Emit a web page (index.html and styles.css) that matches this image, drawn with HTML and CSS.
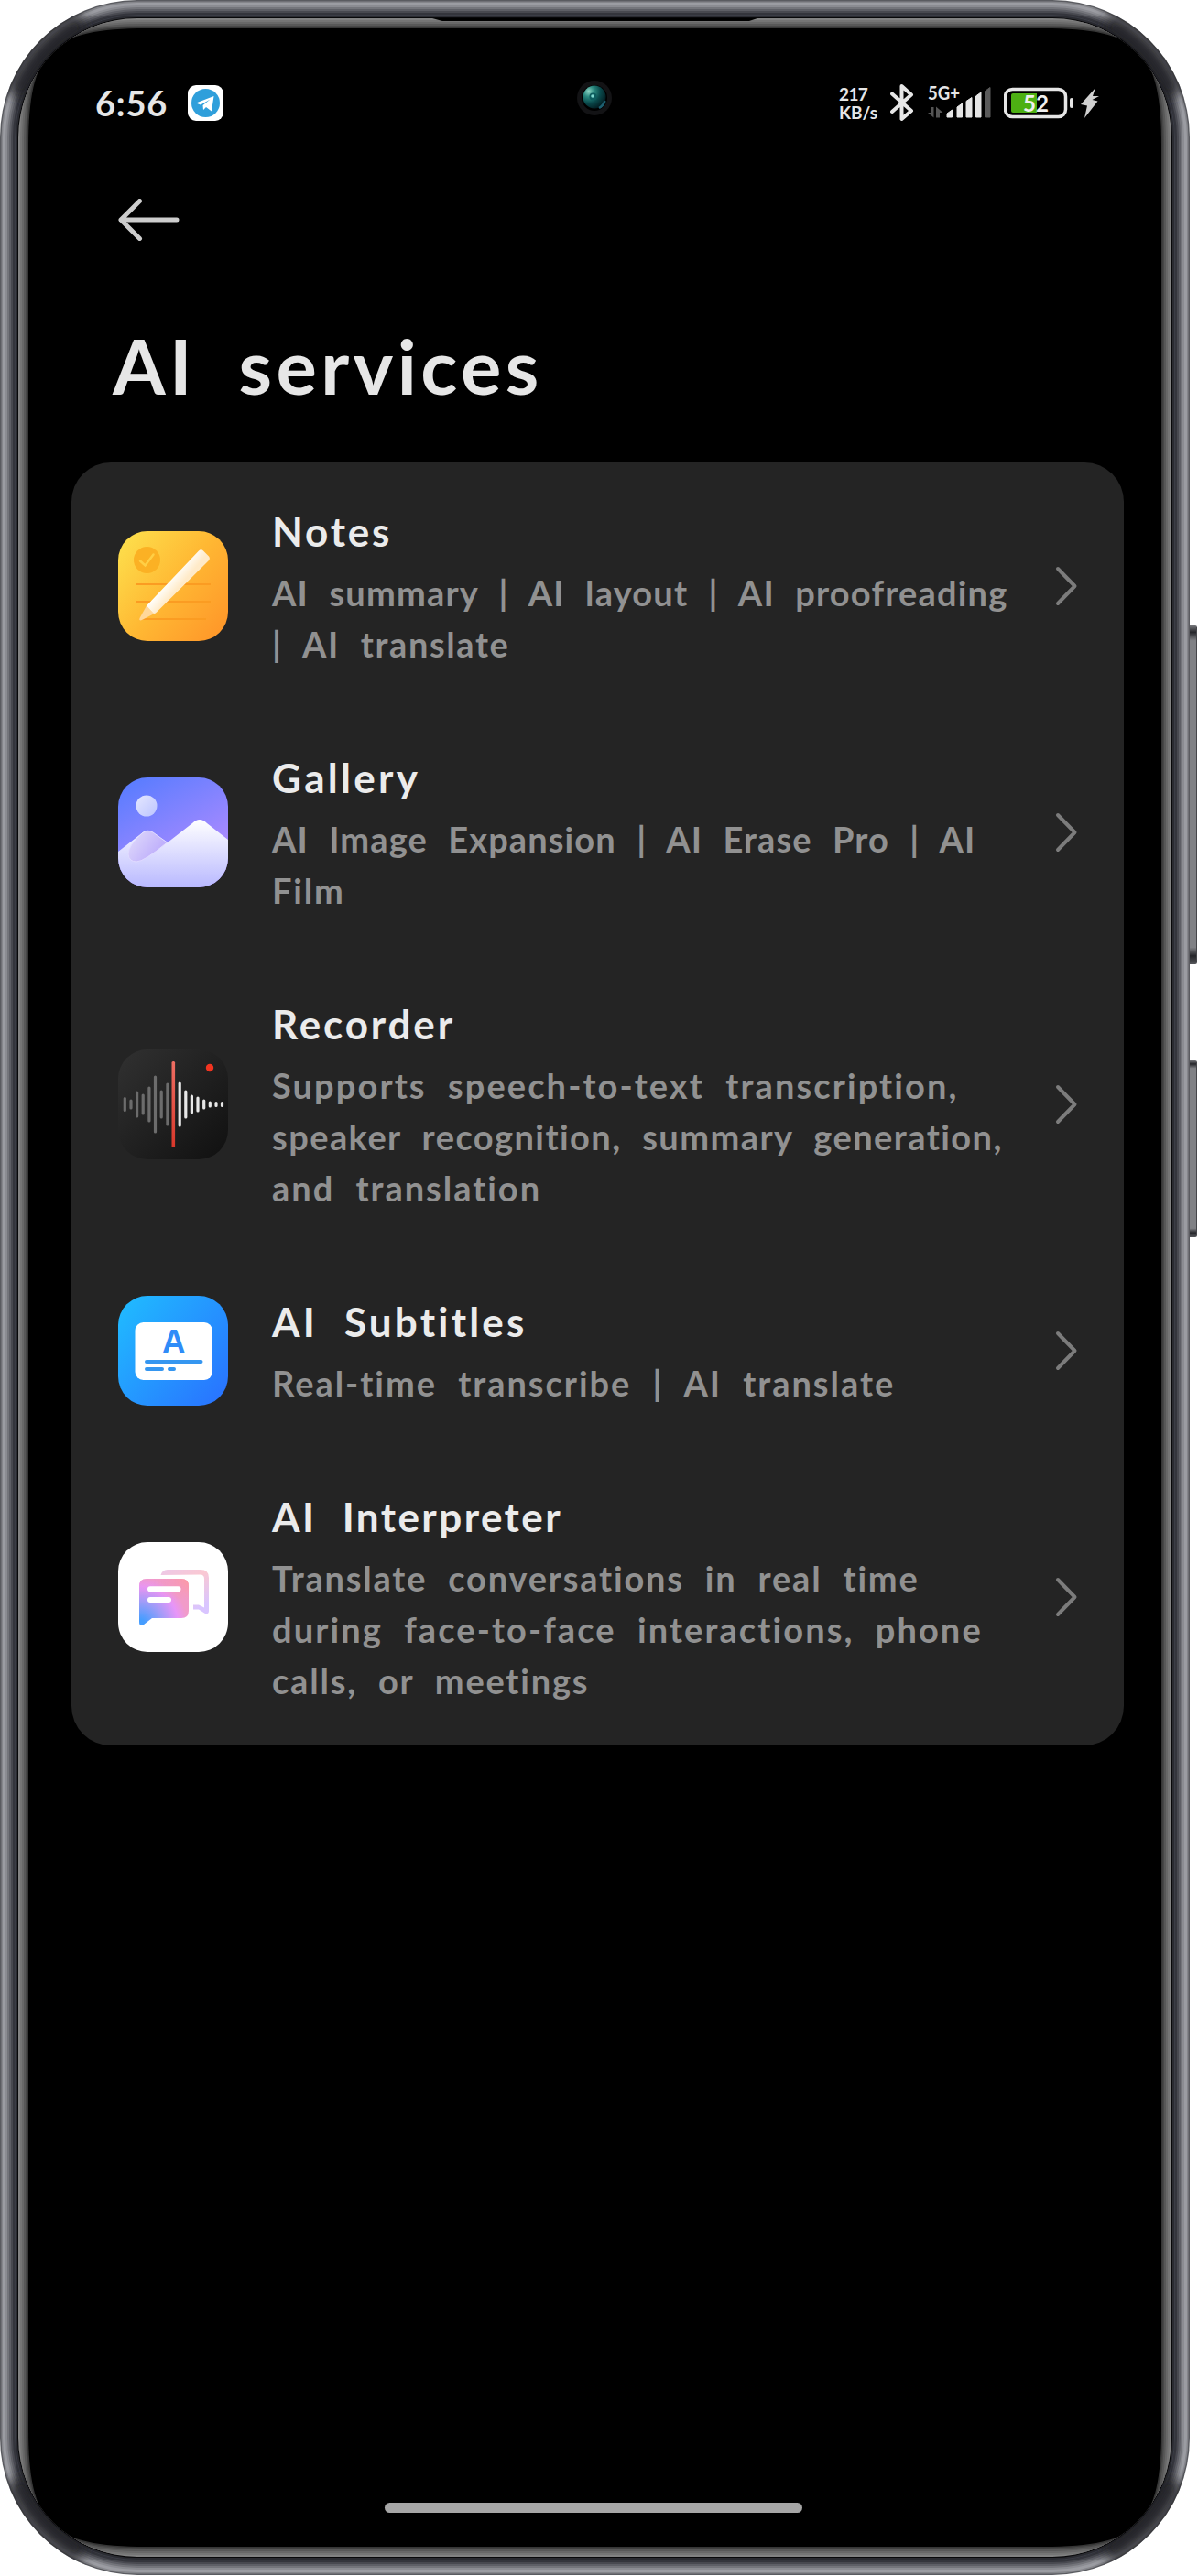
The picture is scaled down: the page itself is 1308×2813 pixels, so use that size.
FILE: index.html
```html
<!DOCTYPE html>
<html lang="en">
<head>
<meta charset="utf-8">
<title>AI services</title>
<link rel="stylesheet" href="styles.css">
</head>
<body>
<div class="phone">
  <svg class="frame" width="1308" height="2813" viewBox="0 0 1308 2813" aria-hidden="true">
    <defs>
      <clipPath id="body"><rect width="1299" height="2812" rx="150"/></clipPath>
      <clipPath id="inner"><rect x="20" y="20" width="1259" height="2772" rx="130"/></clipPath>
      <linearGradient id="key" x1="0" y1="0" x2="0" y2="1">
        <stop offset="0" stop-color="#77787c"/><stop offset=".02" stop-color="#25262a"/><stop offset=".045" stop-color="#808185"/>
        <stop offset=".95" stop-color="#808185"/><stop offset=".975" stop-color="#25262a"/><stop offset="1" stop-color="#55565a"/>
      </linearGradient>
      <filter id="soft" x="-50%" y="-50%" width="200%" height="200%"><feGaussianBlur stdDeviation="7"/></filter>
      <path id="screen" d="M31 160C31 55 55 31 160 31H1139C1244 31 1268 55 1268 160V2652C1268 2757 1244 2781 1139 2781H160C55 2781 31 2757 31 2652Z"/>
    </defs>
    <rect x="1296" y="683" width="11" height="370" rx="2" fill="url(#key)"/>
    <rect x="1296" y="1158" width="11" height="193" rx="2" fill="url(#key)"/>
    <path d="M1306.500 685V1051M1306.500 1160V1349" stroke="#45464a"/>
    <rect width="1299" height="2812" rx="150" fill="#5a5b60"/>
    <rect x="1.500" y="1.500" width="1296" height="2809" rx="148.500" fill="#85868b"/>
    <rect x="3" y="3" width="1293" height="2806" rx="147" fill="#9b9ca2"/>
    <rect x="6" y="6" width="1287" height="2800" rx="144" fill="#8b8c92"/>
    <rect x="8" y="8" width="1283" height="2796" rx="142" fill="#74757b"/>
    <rect x="10" y="10" width="1279" height="2792" rx="140" fill="#5e5f66"/>
    <rect x="12" y="12" width="1275" height="2788" rx="138" fill="#484950"/>
    <rect x="14" y="14" width="1271" height="2784" rx="136" fill="#34353c"/>
    <rect x="16" y="16" width="1267" height="2780" rx="134" fill="#2a2b31"/>
    <rect x="16.500" y="16.500" width="1266" height="2779" rx="133.500" fill="none" stroke="#3b3d46"/>
    <g clip-path="url(#body)" fill="none">
      <path d="M18 105Q36 52 92 24M1281 105Q1263 52 1207 24M18 2707Q36 2760 92 2788M1281 2707Q1263 2760 1207 2788" stroke="#222328" stroke-width="26" opacity=".9" filter="url(#soft)"/>
    </g>
    <rect x="19" y="19" width="1261" height="2774" rx="131" fill="#08080a"/>
    <g clip-path="url(#inner)">
      <rect x="20" y="20" width="1259" height="2772" fill="#828282"/>
      <use href="#screen" stroke="#757575" stroke-width="18"/>
      <use href="#screen" stroke="#686868" stroke-width="14"/>
      <use href="#screen" stroke="#585858" stroke-width="10"/>
      <use href="#screen" stroke="#484848" stroke-width="6"/>
      <use href="#screen" stroke="#363636" stroke-width="3"/>
      <use href="#screen"/>
      <path d="M472 20H827L818 23H483Z"/>
    </g>
  </svg>

  <svg class="camera" width="40" height="40" viewBox="0 0 40 40" aria-hidden="true">
    <defs><radialGradient id="lens" cx=".25" cy=".25" r=".85"><stop offset="0" stop-color="#8fd6c4"/><stop offset=".28" stop-color="#2b8a80"/><stop offset=".6" stop-color="#0a4a4c"/><stop offset="1" stop-color="#02181d"/></radialGradient></defs>
    <circle cx="20" cy="20" r="19" fill="#131315"/><circle cx="20" cy="20" r="14" fill="#000"/>
    <circle cx="20" cy="19" r="12.500" fill="url(#lens)"/>
    <path d="M25 31A14 14 0 0 0 31.500 23" fill="none" stroke="#1d5f70" stroke-width="2.500"/>
    <circle cx="18.500" cy="18.500" r="4" fill="#0d5c5e"/><circle cx="18" cy="18" r="1.800" fill="#7fd8cf"/>
  </svg>

  <header class="status">
    <div class="status-left">
      <span class="clock">6:56</span>
      <svg width="39" height="39" viewBox="0 0 39 39"><rect width="39" height="39" rx="9" fill="#fff"/><circle cx="19.500" cy="19.500" r="15.500" fill="#2f9fdb"/><path d="M9 19.500L28.500 12L26 28.500L20 24L17 27L16.500 22L24.500 15.500L14 21.500Z" fill="#fff"/></svg>
    </div>
    <div class="status-right">
      <div class="speed"><span class="speed-num">217</span><span>KB/s</span></div>
      <svg class="bt" width="26" height="42" viewBox="0 0 26 42"><path d="M2 11.500L23 30L12.500 39V3L23 12.500L2 31" fill="none" stroke="#e6e6e6" stroke-width="4" stroke-linejoin="round" stroke-linecap="round"/></svg>
      <svg class="signal" width="70" height="50" viewBox="0 -4 70 50">
        <text x="0" y="18" textLength="35" lengthAdjust="spacingAndGlyphs" class="net">5G+</text>
        <path d="M0 32H3V26H6.500V37.500ZM9 37.500V25.500L16.500 32H13V37.500Z" fill="#555"/>
        <path d="M21 37V33L26.500 29V37ZM32 37V26L37.500 22V37ZM42 37V19.500L48 15.500V37ZM52.500 37V14L58 10V37Z" fill="#e6e6e6" stroke="#e6e6e6" stroke-linejoin="round"/>
        <path d="M62.500 37V8.500L68 4.500V37Z" fill="#5a5a5a" stroke="#5a5a5a" stroke-linejoin="round"/>
      </svg>
      <svg class="battery" width="105" height="42" viewBox="0 0 105 42">
        <rect x="1.500" y="6.500" width="66" height="30" rx="8" fill="none" stroke="#e6e6e6" stroke-width="3.500"/>
        <path d="M8 13Q8 11 10 11H36V32H10Q8 32 8 30Z" fill="#4db013"/>
        <text x="21" y="31" textLength="28" lengthAdjust="spacingAndGlyphs" class="charge">52</text>
        <rect x="72" y="16" width="4" height="11" rx="2" fill="#e6e6e6"/>
        <path d="M100 5L84 23L91 24.500L88 38L102.500 19.500L96.500 18L104 14L97 14Z" fill="#d0d0d0"/>
      </svg>
    </div>
  </header>

  <nav class="toolbar">
    <svg width="68" height="46" viewBox="0 0 68 46"><path d="M24.500 2.500L4 23L24.500 43.500M4 23H65" fill="none" stroke="#cdcdcd" stroke-width="5" stroke-linecap="round" stroke-linejoin="round"/></svg>
  </nav>
  <h1 class="heading">AI services</h1>

  <main class="card">
    <section class="row">
      <svg class="icon" viewBox="0 0 120 120">
        <defs>
          <linearGradient id="n1" x1="0" y1=".1" x2="1" y2=".9"><stop offset="0" stop-color="#fddf4c"/><stop offset=".5" stop-color="#ffb833"/><stop offset="1" stop-color="#ff9629"/></linearGradient>
          <linearGradient id="n2" gradientUnits="userSpaceOnUse" x1="55" y1="46" x2="69" y2="58"><stop offset=".3" stop-color="#fffefa"/><stop offset="1" stop-color="#ffeac8"/></linearGradient>
        </defs>
        <rect width="120" height="120" fill="url(#n1)"/>
        <circle cx="31.500" cy="31.500" r="14.500" fill="#fbb124"/><path d="M24 32.500L29.500 37.500L38.500 25.500" fill="none" stroke="#ffcf45" stroke-width="2.500" stroke-linecap="round"/>
        <path d="M19 58H101M19 77H101M26 96H96" stroke="#fb9c22" stroke-width="2"/>
        <path d="M31 81.500L39.500 90L27 96.500Q22 99 23.500 95Z" fill="#ffd79a"/>
        <path d="M31 81.500L88 21.500Q90.500 19 93 21.500L99 27.500Q101 30 98.500 32.500L42 88.500Q40 91 38 89Z" fill="url(#n2)"/>
      </svg>
      <div class="text"><h2 class="track-24">Notes</h2><p><span class="track-11">AI summary | AI layout | AI proofreading</span><br><span class="track-14">| AI translate</span></p></div>
      <svg class="chevron" viewBox="0 0 25 44"><path d="M3 3L21.500 22L3 41"/></svg>
    </section>
    <section class="row">
      <svg class="icon" viewBox="0 0 120 120">
        <defs>
          <linearGradient id="g1" x1=".15" y1="0" x2=".6" y2=".8"><stop offset="0" stop-color="#597cff"/><stop offset="1" stop-color="#a98aff"/></linearGradient>
          <linearGradient id="g2" x1="0" y1="0" x2="0" y2="1"><stop offset="0" stop-color="#fff"/><stop offset="1" stop-color="#b9b9ff"/></linearGradient>
          <linearGradient id="g3" x1="0" y1=".2" x2="1" y2=".8"><stop offset="0" stop-color="#dfd9fb"/><stop offset="1" stop-color="#b6a4fb"/></linearGradient>
          <linearGradient id="g4" x1="0" y1="0" x2="1" y2="1"><stop offset="0" stop-color="#e5e8ff"/><stop offset="1" stop-color="#bcc4ff"/></linearGradient>
        </defs>
        <rect width="120" height="120" fill="url(#g1)"/>
        <circle cx="31" cy="31" r="11.500" fill="url(#g4)"/>
        <path d="M0 81L27 60Q32 56 37 60L54 71L81 50Q89 42 97 50L120 68V120H0Z" fill="url(#g2)"/>
        <path d="M53.500 71L38 60Q32 56 26 61Q11 74 11 84Q12 92 20 92Q28 92 53.500 71Z" fill="url(#g3)" stroke="#e0dbff"/>
      </svg>
      <div class="text"><h2 class="track-31">Gallery</h2><p><span class="track-10">AI Image Expansion | AI Erase Pro | AI</span><br><span class="track-17">Film</span></p></div>
      <svg class="chevron" viewBox="0 0 25 44"><path d="M3 3L21.500 22L3 41"/></svg>
    </section>
    <section class="row">
      <svg class="icon" viewBox="0 0 120 120">
        <defs>
          <linearGradient id="r1" x1="0" y1="0" x2="1" y2="1"><stop offset="0" stop-color="#313131"/><stop offset="1" stop-color="#101010"/></linearGradient>
          <linearGradient id="r2" x1="0" y1="0" x2="0" y2="1"><stop offset="0" stop-color="#ef6e63"/><stop offset="1" stop-color="#d8372a"/></linearGradient>
        </defs>
        <rect width="120" height="120" fill="url(#r1)"/>
        <path d="M7.300 53.500V66.500M14 56V64M20.600 47V73M27.200 50V70M33.900 42V78M40.500 30V90M47.200 46V74M53.900 38V82" stroke="#6c6c6c" stroke-width="3.200" stroke-linecap="round"/>
        <path d="M67.200 37V83M73.800 46V74M80.400 51V69M87 53V67M93.700 56V64M100.300 58V62M107 58.500V61.500M113.500 58.500V61.500" stroke="#e8e8e8" stroke-width="3.200" stroke-linecap="round"/>
        <rect x="58.500" y="13" width="3.600" height="94" rx="1.500" fill="url(#r2)"/><circle cx="100" cy="20" r="4.200" fill="#f23420"/>
      </svg>
      <div class="text"><h2 class="track-26">Recorder</h2><p><span class="track-20">Supports speech-to-text transcription,</span><br><span class="track-13">speaker recognition, summary generation,</span><br><span class="track-19">and translation</span></p></div>
      <svg class="chevron" viewBox="0 0 25 44"><path d="M3 3L21.500 22L3 41"/></svg>
    </section>
    <section class="row">
      <svg class="icon" viewBox="0 0 120 120">
        <defs><linearGradient id="s1" x1="0" y1=".1" x2="1" y2=".9"><stop offset="0" stop-color="#20baff"/><stop offset="1" stop-color="#2973ff"/></linearGradient></defs>
        <rect width="120" height="120" fill="url(#s1)"/>
        <rect x="18.500" y="29" width="84.500" height="63" rx="9" fill="#fff"/>
        <text x="60.700" y="63" text-anchor="middle" class="glyph">A</text>
        <path d="M31 72H90.500M31 80H48M56 80H61" stroke="#3596f0" stroke-width="4" stroke-linecap="round"/>
      </svg>
      <div class="text"><h2 class="track-30">AI Subtitles</h2><p><span class="track-19">Real-time transcribe | AI translate</span></p></div>
      <svg class="chevron" viewBox="0 0 25 44"><path d="M3 3L21.500 22L3 41"/></svg>
    </section>
    <section class="row">
      <svg class="icon" viewBox="0 0 120 120">
        <defs>
          <radialGradient id="i1" gradientUnits="userSpaceOnUse" cx="24" cy="90" r="52"><stop offset=".1" stop-color="#459dff"/><stop offset=".45" stop-color="#999cf8"/><stop offset=".8" stop-color="#e795f8"/><stop offset="1" stop-color="#f19bc8"/></radialGradient>
          <linearGradient id="i3" x1="0" y1="0" x2="1" y2="0"><stop offset=".3" stop-color="#ee96cf" stop-opacity=".3"/><stop offset="1" stop-color="#ff9a9c"/></linearGradient>
          <linearGradient id="i4" x1="0" y1="0" x2="0" y2="1"><stop offset="0" stop-color="#fff"/><stop offset=".5" stop-color="#000"/></linearGradient>
          <mask id="i5"><rect x="20" y="38" width="60" height="50" fill="url(#i4)"/></mask>
          <linearGradient id="i2" x1="0" y1="0" x2=".6" y2="1"><stop offset="0" stop-color="#ecc8e8"/><stop offset=".45" stop-color="#fac8d2"/><stop offset="1" stop-color="#d9c5ff"/></linearGradient>
        </defs>
        <rect width="120" height="120" fill="#fff"/>
        <path d="M46.500 36Q48 30 54 30H90Q99 30 99 39V75Q99 79 95 78L88 73.500H82V68.500H88L94 71.500V40Q94 35.500 89.500 35.500Z" fill="url(#i2)"/>
        <path d="M31 40H69Q77 40 77 48V75Q77 83 69 83H37L28 90Q23 93 23 87V48Q23 40 31 40Z" fill="url(#i1)"/>
        <path d="M31 40H69Q77 40 77 48V75Q77 83 69 83H37L28 90Q23 93 23 87V48Q23 40 31 40Z" fill="url(#i3)" mask="url(#i5)"/>
        <path d="M35 51.300H65.500M35 63H55" stroke="#fff" stroke-width="6" stroke-linecap="round"/>
      </svg>
      <div class="text"><h2 class="track-23">AI Interpreter</h2><p><span class="track-17">Translate conversations in real time</span><br><span class="track-20">during face-to-face interactions, phone</span><br><span class="track-16">calls, or meetings</span></p></div>
      <svg class="chevron" viewBox="0 0 25 44"><path d="M3 3L21.500 22L3 41"/></svg>
    </section>
  </main>
  <div class="home-bar"></div>
</div>
</body>
</html>
```

FILE: styles.css
```css
* { box-sizing: border-box; }
body { margin: 0; background: #fff; font-family: Lato, "Open Sans", sans-serif; }
h1, h2, p { margin: 0; }
svg { display: block; flex: none; }

.phone {
  position: relative;
  display: flex;
  flex-direction: column;
  width: 1308px;
  height: 2813px;
  overflow: hidden;
}
.frame { position: absolute; top: 0; left: 0; }
.camera { position: absolute; top: 87px; left: 629px; }
.status, .toolbar, .heading, .card, .home-bar { position: relative; }

.status {
  display: flex;
  justify-content: space-between;
  align-items: center;
  height: 134px;
  padding: 90px 107px 0 104px;
}
.status-left, .status-right { display: flex; align-items: center; color: #e6e6e6; }
.clock {
  width: 101px;
  font-size: 38px;
  font-weight: 700;
  line-height: 44px;
  letter-spacing: .8px;
}
.speed {
  display: flex;
  flex-direction: column;
  gap: 1px;
  width: 56px;
  font-size: 19px;
  font-weight: 700;
  line-height: 19px;
}
.speed-num { letter-spacing: -.6px; }
.bt { margin-right: 15px; }
.signal { margin-right: 13px; }
.net { font-size: 20px; font-weight: 700; fill: #e6e6e6; }
.charge { font-size: 25px; font-weight: 700; fill: #f0f0f0; }

.toolbar { height: 232px; padding: 83px 0 0 128px; }
.heading {
  height: 139px;
  padding-left: 123px;
  color: #e6e6e6;
  font-size: 83px;
  font-weight: 700;
  line-height: 66px;
  letter-spacing: 4.400px;
  word-spacing: 22px;
}

.card {
  width: 1149px;
  margin-left: 78px;
  border-radius: 43px;
  background: #242424;
}
.row {
  display: flex;
  align-items: center;
  padding: 45px 50px 43px 51px;
}
.icon { width: 120px; height: 120px; margin: 0 48px 2px 0; border-radius: 32px; }
.text { flex: 1; white-space: nowrap; }
.text h2 {
  margin-bottom: 9px;
  color: #ebebeb;
  font-size: 44px;
  font-weight: 700;
  line-height: 60px;
  word-spacing: 15px;
}
.text p {
  color: #919191;
  font-size: 38px;
  font-weight: 700;
  line-height: 56px;
  word-spacing: 12px;
}
.chevron {
  width: 25px;
  height: 44px;
  margin-bottom: 2px;
  fill: none;
  stroke: #7c7c7c;
  stroke-width: 4px;
  stroke-linecap: round;
  stroke-linejoin: round;
}
.glyph { font: 700 36px "Liberation Sans", sans-serif; fill: #2f8cf8; }

.track-10 { letter-spacing: 1.110px; }
.track-11 { letter-spacing: 1.180px; }
.track-13 { letter-spacing: 1.440px; }
.track-14 { letter-spacing: 1.600px; }
.track-16 { letter-spacing: 1.800px; }
.track-17 { letter-spacing: 1.800px; }
.track-19 { letter-spacing: 1.970px; }
.track-20 { letter-spacing: 2.090px; }
.track-23 { letter-spacing: 2.450px; }
.track-24 { letter-spacing: 2.800px; }
.track-26 { letter-spacing: 2.850px; }
.track-30 { letter-spacing: 3.200px; }
.track-31 { letter-spacing: 3.300px; }

.home-bar {
  width: 456px;
  height: 11px;
  margin: auto 0 69px 420px;
  border-radius: 6px;
  background: #a6a6a6;
}
```
